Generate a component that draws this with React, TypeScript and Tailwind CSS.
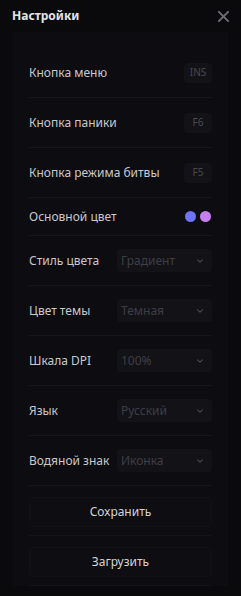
import React from "react";

const Chevron = () => (
  <svg width="8" height="8" viewBox="0 0 10 10" fill="none" stroke="#4a4950" strokeWidth="1.4" strokeLinecap="round" strokeLinejoin="round">
    <path d="M2 3.5 L5 6.5 L8 3.5" />
  </svg>
);

const KeyRow = ({ label, k }: { label: string; k: string }) => (
  <div className="flex h-[50px] items-center justify-between border-b border-[#17161b]">
    <span className="text-[12px] text-[#c9c8cc]">{label}</span>
    <span className="flex h-[20px] w-[28px] items-center justify-center rounded-[4px] bg-[#131217] text-[10px] text-[#4a4950]">{k}</span>
  </div>
);

const SelectRow = ({ label, v }: { label: string; v: string }) => (
  <div className="flex h-[50px] items-center border-b border-[#17161b]">
    <span className="w-[88px] text-[12px] text-[#c9c8cc]">{label}</span>
    <div className="flex h-[23px] flex-1 items-center justify-between rounded-[4px] bg-[#131217] pl-[4px] pr-[8px]">
      <span className="text-[12px] text-[#3f3e45]">{v}</span>
      <Chevron />
    </div>
  </div>
);

const ButtonRow = ({ label }: { label: string }) => (
  <div className="flex h-[50px] items-center border-b border-[#131216] pt-[3px]">
    <div className="flex h-[30px] flex-1 items-center justify-center rounded-[4px] border border-[#121115] bg-[#0e0d11] text-[12px] text-[#d4d3d7]">{label}</div>
  </div>
);

export default function App() {
  return (
    <div className="h-[596px] w-[241px] overflow-hidden bg-[#0a090c]" style={{ fontFamily: '"Noto Sans", "Open Sans", sans-serif' }}>
      <div className="flex h-[32px] items-center justify-between pl-[12px] pr-[11px]">
        <span className="text-[12px] font-bold text-[#e4e4e6]">Настройки</span>
        <svg width="13" height="13" viewBox="0 0 14 14" stroke="#6c6b70" strokeWidth="2.2" strokeLinecap="round">
          <path d="M2 2 L12 12 M12 2 L2 12" />
        </svg>
      </div>
      <div className="mx-[13px] h-[554px] bg-[#0d0c10] px-[16px] pt-[16px]">
        <KeyRow label="Кнопка меню" k="INS" />
        <KeyRow label="Кнопка паники" k="F6" />
        <KeyRow label="Кнопка режима битвы" k="F5" />
        <div className="flex h-[38px] items-center justify-between border-b border-[#17161b]">
          <span className="text-[12px] text-[#c9c8cc]">Основной цвет</span>
          <div className="flex gap-[4px] pr-[1px]">
            <span className="h-[11px] w-[11px] rounded-full bg-[#6f73f5]" />
            <span className="h-[11px] w-[11px] rounded-full bg-[#c77ff0]" />
          </div>
        </div>
        <SelectRow label="Стиль цвета" v="Градиент" />
        <SelectRow label="Цвет темы" v="Темная" />
        <SelectRow label="Шкала DPI" v="100%" />
        <SelectRow label="Язык" v="Русский" />
        <SelectRow label="Водяной знак" v="Иконка" />
        <ButtonRow label="Сохранить" />
        <ButtonRow label="Загрузить" />
      </div>
    </div>
  );
}
